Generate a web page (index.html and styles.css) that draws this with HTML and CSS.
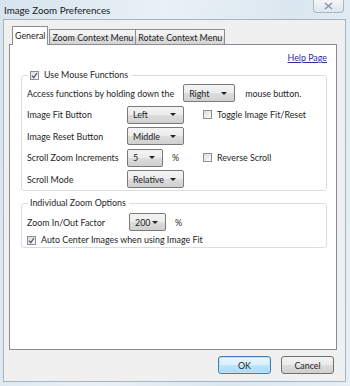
FILE: index.html
```html
<!DOCTYPE html>
<html lang="en">
<head>
<meta charset="UTF-8">
<meta name="viewport" content="width=device-width, initial-scale=1.0">
<title>Image Zoom Preferences</title>
<link rel="stylesheet" href="styles.css">
</head>
<body>

<div class="window">
  <div class="titlebar">
    <span class="title">Image Zoom Preferences</span>
    <span class="close-btn">
      <svg width="9" height="8" viewBox="0 0 9 8"><path d="M1 1 L8 7 M8 1 L1 7" stroke="#8e99a4" stroke-width="1.6" fill="none"/></svg>
    </span>
  </div>

  <div class="client">
    <div class="tabs">
      <div class="tab active">General</div>
      <div class="tab">Zoom Context Menu</div>
      <div class="tab">Rotate Context Menu</div>
    </div>

    <div class="tab-panel">
      <div class="help-row"><a class="help-link" href="#">Help Page</a></div>

      <fieldset class="group">
        <legend><span class="check checked"></span>Use Mouse Functions</legend>
        <div class="row first-row">
          <span>Access functions by holding down the</span>
          <div class="select w-right">Right<i class="arrow"></i></div>
          <span class="after">mouse button.</span>
        </div>
        <div class="grid">
          <span>Image Fit Button</span>
          <div class="cell"><div class="select w-wide">Left<i class="arrow"></i></div></div>
          <span class="check-label"><span class="check"></span>Toggle Image Fit/Reset</span>

          <span>Image Reset Button</span>
          <div class="cell"><div class="select w-wide">Middle<i class="arrow"></i></div></div>
          <span></span>

          <span>Scroll Zoom Increments</span>
          <div class="cell"><div class="select w-small">5<i class="arrow"></i></div><span class="pct">%</span></div>
          <span class="check-label"><span class="check"></span>Reverse Scroll</span>

          <span>Scroll Mode</span>
          <div class="cell"><div class="select w-wide">Relative<i class="arrow"></i></div></div>
          <span></span>
        </div>
      </fieldset>

      <fieldset class="group second">
        <legend>Individual Zoom Options</legend>
        <div class="row factor-row">
          <span class="factor-label">Zoom In/Out Factor</span>
          <div class="select w-factor">200<i class="arrow"></i></div>
          <span class="pct">%</span>
        </div>
        <div class="check-label center-row"><span class="check checked"></span>Auto Center Images when using Image Fit</div>
      </fieldset>
    </div>

    <div class="buttons">
      <button class="btn default">OK</button>
      <button class="btn">Cancel</button>
    </div>
  </div>
</div>

</body>
</html>
```

FILE: styles.css
```css
body {
  margin: 0;
  background: linear-gradient(100deg, #d6e4ee 0%, #e9f1f6 40%, #dbe7f0 70%, #e6eff5 100%);
  font-family: Lato, "Open Sans", sans-serif;
  font-size: 8.9px;
  color: #1e1e1e;
}
.window {
  height: 386px;
  display: flex;
  flex-direction: column;
}
.titlebar {
  height: 19px;
  display: flex;
  justify-content: space-between;
  align-items: flex-start;
  padding-left: 4px;
}
.title {
  font-size: 9.8px;
  line-height: 20px;
  color: #1b1b1b;
}
.close-btn {
  width: 29px;
  height: 12px;
  margin-right: 6px;
  border: 1px solid #a9b7c4;
  border-top: none;
  border-radius: 0 0 4px 4px;
  background: linear-gradient(#f2f6f9, #dde7ee);
  display: flex;
  align-items: center;
  justify-content: center;
}
.client {
  flex: 1;
  margin: 0 4px 4px 3px;
  background: #f0f0f0;
  border: 1px solid #a6b4bf;
  padding: 6px 8px 0 5px;
  display: flex;
  flex-direction: column;
}
.tabs {
  display: flex;
  align-items: flex-end;
  margin-left: 3px;
  height: 18px;
  position: relative;
  z-index: 1;
}
.tab {
  height: 15px;
  line-height: 15px;
  padding: 0 2px;
  border: 1px solid #898c95;
  border-bottom: none;
  margin-right: -1px;
  background: linear-gradient(#f7f7f7 0%, #ececec 50%, #dedede 51%, #d4d4d4 100%);
  box-sizing: border-box;
}
.tab.active {
  height: 19px;
  line-height: 17px;
  background: #fff;
  margin-bottom: -1px;
  margin-right: 1px;
}
.tab-panel {
  height: 306px;
  box-sizing: border-box;
  background: #fff;
  border: 1px solid #898c95;
  padding: 7px 9px 0 11px;
}
.help-row {
  display: flex;
  justify-content: flex-end;
  line-height: 12px;
}
.help-link {
  color: #2d2f9a;
  text-decoration: underline;
}
.group {
  margin: 5px 0 0 0;
  padding: 3px 6px 2px 5px;
  border: 1px solid #d5dfe5;
  border-radius: 3px;
}
.group legend {
  padding: 0 3px 0 2px;
  margin-left: 1px;
  line-height: 12px;
  display: flex;
  align-items: center;
}
.group.second {
  margin-top: 6px;
  padding-top: 4px;
  padding-bottom: 1px;
}
.row {
  display: flex;
  align-items: center;
  height: 18px;
}
.first-row .select {
  margin-left: 9px;
}
.first-row .after {
  margin-left: 10px;
}
.grid {
  display: grid;
  grid-template-columns: 100px 76px auto;
  grid-auto-rows: 18px;
  row-gap: 3.5px;
  align-items: center;
  margin-top: 3.5px;
}
.cell {
  display: flex;
  align-items: center;
}
.pct {
  margin-left: 9px;
}
.select {
  height: 18px;
  box-sizing: border-box;
  border: 1px solid #7a7a7a;
  border-radius: 2px;
  background: linear-gradient(#f4f4f4 0%, #ebebeb 50%, #dddddd 51%, #d0d0d0 100%);
  display: flex;
  align-items: center;
  justify-content: space-between;
  padding: 0 7px 0 5px;
  color: #222;
}
.arrow {
  width: 0;
  height: 0;
  border-left: 3px solid transparent;
  border-right: 3px solid transparent;
  border-top: 3px solid #222;
}
.w-right { width: 52px; }
.w-wide { width: 57px; }
.w-small { width: 36px; }
.w-factor { width: 37px; }
.factor-label {
  width: 102px;
}
.check-label {
  display: flex;
  align-items: center;
}
.check {
  width: 9px;
  height: 9px;
  box-sizing: border-box;
  border: 1px solid #8f8f8f;
  background: linear-gradient(135deg, #dcdcdc, #fbfbfb);
  margin-right: 5px;
  flex: none;
}
.check.checked {
  background: linear-gradient(135deg, #dcdcdc, #fbfbfb) center/contain no-repeat;
  background-image: url("data:image/svg+xml,%3Csvg xmlns='http://www.w3.org/2000/svg' viewBox='0 0 7 7'%3E%3Cpath d='M1 3.6 L2.8 5.6 L6 1' stroke='%234a5a78' stroke-width='1.3' fill='none'/%3E%3C/svg%3E"), linear-gradient(135deg, #dcdcdc, #fbfbfb);
}
.check-label .check {
  margin-right: 5px;
}
.center-row {
  margin-top: 3px;
  line-height: 12px;
}
.buttons {
  display: flex;
  justify-content: flex-end;
  gap: 10px;
  margin-top: 6px;
  margin-right: 3px;
}
.btn {
  width: 53px;
  height: 18px;
  font-family: inherit;
  font-size: 8.9px;
  color: #1e1e1e;
  border: 1px solid #707070;
  border-radius: 3px;
  background: linear-gradient(#f2f2f2 0%, #ebebeb 50%, #dddddd 51%, #cfcfcf 100%);
  padding: 0;
}
.btn.default {
  border-color: #3c7fb1;
  background: linear-gradient(#eaf6fd 0%, #d9f0fc 50%, #bee6fd 51%, #a7d9f5 100%);
  box-shadow: inset 0 0 0 1px #c0e4f8;
}
```
